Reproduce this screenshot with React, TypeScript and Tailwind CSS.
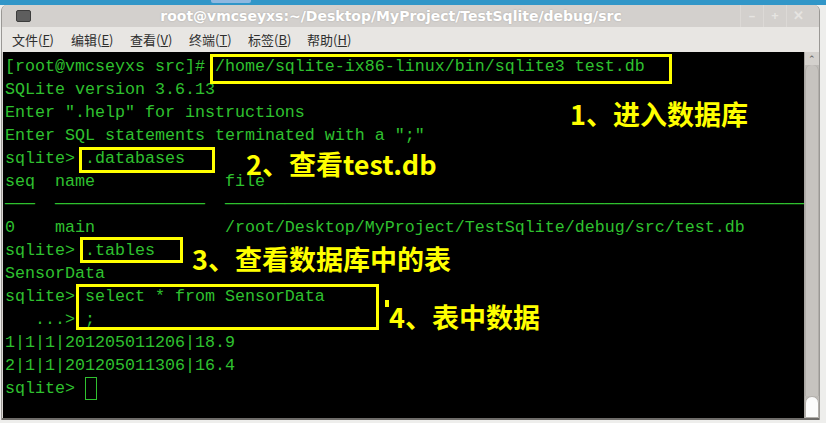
import React from "react";

const mono = { fontFamily: '"Liberation Mono", "DejaVu Sans Mono", monospace' };
const cjk = { fontFamily: '"Noto Sans CJK SC", "Noto Sans", sans-serif' };

const lines: string[] = [
  "[root@vmcseyxs src]# /home/sqlite-ix86-linux/bin/sqlite3 test.db",
  "SQLite version 3.6.13",
  'Enter ".help" for instructions',
  'Enter SQL statements terminated with a ";"',
  "sqlite> .databases",
  "seq  name             file",
  "───  ───────────────  ──────────────────────────────────────────────────────────",
  "0    main             /root/Desktop/MyProject/TestSqlite/debug/src/test.db",
  "sqlite> .tables",
  "SensorData",
  "sqlite> select * from SensorData",
  "   ...> ;",
  "1|1|1|201205011206|18.9",
  "2|1|1|201205011306|16.4",
];

const menus = [
  ["文件", "F"],
  ["编辑", "E"],
  ["查看", "V"],
  ["终端", "T"],
  ["标签", "B"],
  ["帮助", "H"],
];

function TitleBar() {
  return (
    <div className="flex h-[22px] items-center rounded-t-[6px] bg-[#d3d0cd]">
      <div className="flex w-[40px] justify-center pl-[2px]">
        <div className="h-[12px] w-[15px] rounded-[2px] border border-[#3c3c3c] bg-[#5e5e5e]" />
      </div>
      <div
        className="flex-1 text-center text-[14px] font-bold text-white [text-shadow:0_0_2px_rgba(0,0,0,0.2)]"
        style={{ fontFamily: '"DejaVu Sans", sans-serif' }}
      >
        root@vmcseyxs:~/Desktop/MyProject/TestSqlite/debug/src
      </div>
      <div className="flex h-full items-center pr-[10px] text-[13px] font-bold text-[#e6e4e1]">
        <span className="flex h-full w-[23px] items-center justify-center border-l border-[#dcd9d6]">–</span>
        <span className="flex h-full w-[23px] items-center justify-center border-l border-[#dcd9d6]">+</span>
        <span className="flex h-full w-[23px] items-center justify-center border-l border-[#dcd9d6]">✕</span>
      </div>
    </div>
  );
}

function MenuBar() {
  return (
    <div className="flex h-[25px] items-center gap-[18px] bg-[#e8e6e3] pl-[10px] text-[13px] text-[#2e2e2e]" style={cjk}>
      {menus.map(([label, key]) => (
        <span key={key} className="w-[41px] whitespace-nowrap">
          {label}(<span className="underline">{key}</span>)
        </span>
      ))}
    </div>
  );
}

function Terminal() {
  return (
    <div className="relative h-[366px] min-w-0 flex-1 overflow-hidden bg-black pl-[2px] pt-[3px] text-[16.67px] text-[#2fc12f]" style={mono}>
      {lines.map((l, i) => (
        <div key={i} className="h-[23px] whitespace-pre leading-[23px]">
          {l}
        </div>
      ))}
      <div className="flex h-[23px] items-center whitespace-pre leading-[23px]">
        {"sqlite> "}
        <span className="inline-block h-[23px] w-[12px] border border-[#2fc12f]" />
      </div>
    </div>
  );
}

function ScrollBar() {
  return (
    <div className="flex h-[366px] w-[15px] shrink-0 flex-col border-l border-[#a9a6a2] bg-[#bebbb7]">
      <div className="flex h-[13px] items-center justify-center bg-[#d4d1cd] text-[9px] leading-none text-[#555]">⌃</div>
      <div className="flex-1 rounded-t-[6px] border-x border-[#b1aeaa] bg-[#c6c3bf]" />
      <div className="h-[22px] rounded-t-[7px] border border-[#b1aeaa] bg-[#fbfbfb]" />
    </div>
  );
}

export default function App() {
  return (
    <div className="relative h-[423px] w-[826px] overflow-hidden bg-[#eeeeec]">
      <div className="relative h-[5px] bg-[#3196c8]">
        <div className="absolute left-[211px] top-0 h-[3px] w-[40px] rounded-b-[2px] bg-[#8fb8e0]" />
      </div>
      <div className="ml-[1px] w-[819px] rounded-t-[6px] border-x border-[#9a9895] bg-[#d8d5d2]">
        <TitleBar />
        <MenuBar />
        <div className="flex pl-[1px]">
          <Terminal />
          <ScrollBar />
        </div>
        <div className="h-[2px] bg-[#6e6c69]" />
      </div>

      {/* annotations */}
      <div className="absolute left-[210px] top-[54px] h-[30px] w-[462px] border-[3px] border-[#ffff00]" />
      <div className="absolute left-[79px] top-[147px] h-[26px] w-[136px] border-[3px] border-[#ffff00]" />
      <div className="absolute left-[80px] top-[237px] h-[26px] w-[103px] border-[3px] border-[#ffff00]" />
      <div className="absolute left-[76px] top-[284px] h-[46px] w-[303px] border-[3px] border-[#ffff00]" />
      <div className="absolute left-[385px] top-[300px] h-[7px] w-[4px] bg-[#ffff00]" />

      <div className="absolute left-[570px] top-[97px] text-[27px] font-bold leading-[34px] text-[#ffff00]" style={cjk}>
        1、进入数据库
      </div>
      <div className="absolute left-[246px] top-[147px] whitespace-nowrap text-[27px] font-bold leading-[34px] text-[#ffff00]" style={cjk}>
        2、查看test.db
      </div>
      <div className="absolute left-[192px] top-[242px] whitespace-nowrap text-[27px] font-bold leading-[34px] text-[#ffff00]" style={cjk}>
        3、查看数据库中的表
      </div>
      <div className="absolute left-[389px] top-[300px] whitespace-nowrap text-[27px] font-bold leading-[34px] text-[#ffff00]" style={cjk}>
        4、表中数据
      </div>
    </div>
  );
}
